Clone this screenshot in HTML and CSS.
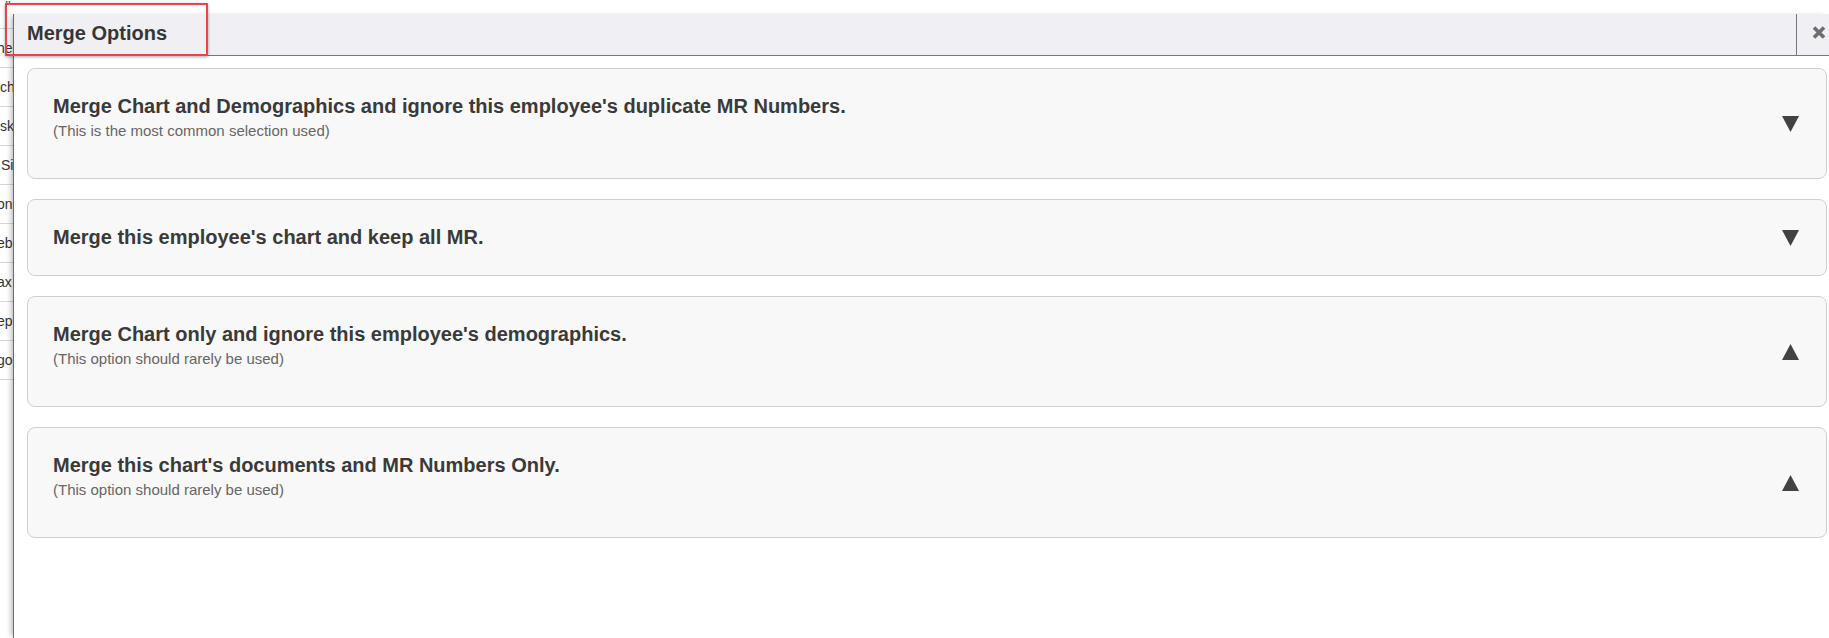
FILE: index.html
```html
<!DOCTYPE html>
<html>
<head>
<meta charset="utf-8">
<title>Merge Options</title>
<link rel="stylesheet" href="styles.css">
</head>
<body>

<!-- page behind the dialog -->
<ul class="side-list">
  <li class="first">’’</li>
  <li class="cut">he</li>
  <li>che</li>
  <li>sk</li>
  <li class="pad">Si</li>
  <li class="cut">on</li>
  <li class="cut">eb</li>
  <li class="cut">ax</li>
  <li class="cut">ep</li>
  <li class="cut">go</li>
</ul>

<!-- MERGE DIALOG -->
<div class="modal">
  <div class="modal-head">
    <h3 class="modal-title">Merge Options</h3>
    <button class="modal-close" title="Close">
      <svg width="14" height="13" viewBox="0 0 14 13"><path d="M2 1.5L12 11.5M12 1.5L2 11.5" stroke="#6e6e6e" stroke-width="3.6"/></svg>
    </button>
  </div>

  <div class="modal-body">
    <div class="option">
      <div class="option-text">
        <div class="option-title">Merge Chart and Demographics and ignore this employee's duplicate MR Numbers.</div>
        <div class="option-sub">(This is the most common selection used)</div>
      </div>
      <svg class="arrow" width="17" height="16" viewBox="0 0 17 16"><polygon points="0,0 17,0 8.5,16"/></svg>
    </div>

    <div class="option">
      <div class="option-text">
        <div class="option-title">Merge this employee's chart and keep all MR.</div>
      </div>
      <svg class="arrow" width="17" height="16" viewBox="0 0 17 16"><polygon points="0,0 17,0 8.5,16"/></svg>
    </div>

    <div class="option">
      <div class="option-text">
        <div class="option-title">Merge Chart only and ignore this employee's demographics.</div>
        <div class="option-sub">(This option should rarely be used)</div>
      </div>
      <svg class="arrow" width="17" height="16" viewBox="0 0 17 16"><polygon points="8.5,0 17,16 0,16"/></svg>
    </div>

    <div class="option">
      <div class="option-text">
        <div class="option-title">Merge this chart's documents and MR Numbers Only.</div>
        <div class="option-sub">(This option should rarely be used)</div>
      </div>
      <svg class="arrow" width="17" height="16" viewBox="0 0 17 16"><polygon points="8.5,0 17,16 0,16"/></svg>
    </div>
  </div>
</div>

<!-- red annotation round the title -->
<div class="highlight"></div>

</body>
</html>
```

FILE: styles.css
```css
body{
  margin:0;
  font-family:"Liberation Sans", Arial, sans-serif;
  background:#fff;
  color:#333;
  overflow:hidden;
}

/* list behind the dialog */
.side-list{
  list-style:none;
  margin:0;
  padding:0;
  width:200px;
}
.side-list li{
  height:38px;
  line-height:38px;
  border-bottom:1px solid #d6d6d6;
  font-size:14px;
  color:#333;
  white-space:nowrap;
  overflow:hidden;
}
.side-list li.first{height:28px;line-height:12px;padding-left:5px;color:#555;}
.side-list li.cut{text-indent:-3px;}
.side-list li.pad{text-indent:1px;}

/* dialog */
.modal{
  position:fixed;
  left:13px;
  top:14px;
  right:0;
  bottom:0;
  background:#fff;
  border-left:1px solid #6a6a6a;
  box-shadow:-4px 0 5px -2px rgba(0,0,0,0.25);
}

.modal-head{
  display:flex;
  justify-content:space-between;
  height:42px;
  box-sizing:border-box;
  background:#efeff4;
  border-bottom:1px solid #777;
}

.modal-title{
  margin:0;
  padding:8px 0 0 13px;
  font-size:20px;
  line-height:23px;
  font-weight:bold;
  color:#363636;
}

.modal-close{
  width:33px;
  box-sizing:border-box;
  margin:0;
  padding:12px 3px 0 15px;
  border:none;
  border-left:1px solid #777;
  background:transparent;
  display:flex;
  align-items:flex-start;
  cursor:pointer;
}

.modal-body{
  display:flex;
  flex-direction:column;
  gap:20px;
  padding:12px 2px 0 13px;
}

.option{
  display:flex;
  align-items:center;
  justify-content:space-between;
  background:#f8f8f8;
  border:1px solid #cfcfcf;
  border-radius:8px;
  padding:26px 27px 26px 25px;
  cursor:pointer;
}

.option-title{
  font-size:20px;
  line-height:23px;
  font-weight:bold;
  color:#3a3a3a;
}

.option-sub{
  margin:4px 0 13px;
  font-size:15px;
  line-height:17px;
  color:#666;
}

.arrow{fill:#424242;flex:none;}

/* annotation */
.highlight{
  position:absolute;
  left:5px;
  top:3px;
  width:199px;
  height:49px;
  border:2.5px solid #ef4242;
  box-shadow:0 1px 3px rgba(0,0,0,0.35);
  pointer-events:none;
}
```
